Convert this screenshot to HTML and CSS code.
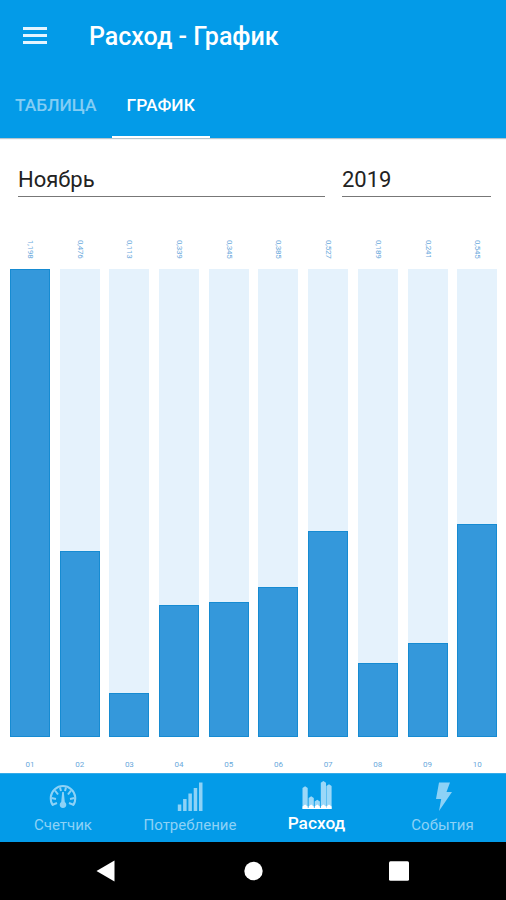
FILE: index.html
```html
<!DOCTYPE html>
<html lang="ru">
<head>
<meta charset="utf-8">
<title>Расход - График</title>
<link rel="stylesheet" href="styles.css">
</head>
<body>
<div class="app">
  <header class="header">
    <div class="toolbar">
      <svg class="menu" viewBox="0 0 24 18"><path d="M0 0h24v3H0zM0 7h24v3H0zM0 14h24v3H0z" fill="currentColor"/></svg>
      <h1 class="title">Расход - График</h1>
    </div>
    <nav class="tabs">
      <a class="tab">ТАБЛИЦА</a>
      <a class="tab tab-active">ГРАФИК</a>
    </nav>
  </header>
  <main class="content">
    <div class="filters">
      <div class="field field-month">Ноябрь</div>
      <div class="field field-year">2019</div>
    </div>
    <div class="chart">
      <div class="column"><span class="value">1,198</span><div class="track"><div class="bar" style="height:100%"></div></div><span class="day">01</span></div>
      <div class="column"><span class="value">0,476</span><div class="track"><div class="bar" style="height:39.7%"></div></div><span class="day">02</span></div>
      <div class="column"><span class="value">0,113</span><div class="track"><div class="bar" style="height:9.4%"></div></div><span class="day">03</span></div>
      <div class="column"><span class="value">0,339</span><div class="track"><div class="bar" style="height:28.3%"></div></div><span class="day">04</span></div>
      <div class="column"><span class="value">0,345</span><div class="track"><div class="bar" style="height:28.8%"></div></div><span class="day">05</span></div>
      <div class="column"><span class="value">0,385</span><div class="track"><div class="bar" style="height:32.1%"></div></div><span class="day">06</span></div>
      <div class="column"><span class="value">0,527</span><div class="track"><div class="bar" style="height:44%"></div></div><span class="day">07</span></div>
      <div class="column"><span class="value">0,189</span><div class="track"><div class="bar" style="height:15.8%"></div></div><span class="day">08</span></div>
      <div class="column"><span class="value">0,241</span><div class="track"><div class="bar" style="height:20.1%"></div></div><span class="day">09</span></div>
      <div class="column"><span class="value">0,545</span><div class="track"><div class="bar" style="height:45.5%"></div></div><span class="day">10</span></div>
    </div>
  </main>
  <nav class="bottom-nav">
    <a class="item">
      <svg class="icon" viewBox="0 0 32 32">
        <path d="M6 25.500A12.300 12.300 0 1 1 26 25.500" fill="none" stroke="currentColor" stroke-width="2"/>
        <path d="M5 25l5-2M27 25l-5-2M4.500 18l4.500 1M27.500 18l-4.500 1M8 10.500l3 4M24 10.500l-3 4M13 7.500l1 3.500M19 7.500l-1 3.500" stroke="currentColor" stroke-width="2"/>
        <path d="M15.200 12h1.600l1 10a3.300 3.300 0 1 1-3.600 0z" fill="currentColor"/>
      </svg>
      <span class="label">Счетчик</span>
    </a>
    <a class="item">
      <svg class="icon" viewBox="0 0 32 32"><path d="M3.800 24.500h3.500V31H3.800zM9.100 19h3.500v12H9.100zM14.400 13.500h3.500V31h-3.500zM19.700 8h3.500v23h-3.500zM25 2.500h3.500V31H25z" fill="currentColor"/></svg>
      <span class="label">Потребление</span>
    </a>
    <a class="item item-active">
      <svg class="icon" viewBox="0 0 32 32">
        <path d="M1.500 8l2.600-1.700L6.700 8v21H1.500zM7.600 18l2.600-1.700 2.600 1.700v11H7.600zM13.700 21.500l2.600-1.700 2.600 1.700V29h-5.200zM19.800 2.700L22.400 1 25 2.700V29h-5.200zM25.400 6L28 4.300 30.600 6v23h-5.200z" class="icon-bars"/>
        <path d="M1.500 29v-2.500l2.600-2 2.600 2V29zM7.600 29v-2.500l2.600-2 2.600 2V29zM13.700 29v-2.500l2.600-2 2.600 2V29zM19.800 29v-2.500l2.600-2 2.600 2V29zM25.400 29v-2.500l2.600-2 2.600 2V29zM1.500 28h29.100v1H1.500z" fill="currentColor"/>
      </svg>
      <span class="label">Расход</span>
    </a>
    <a class="item">
      <svg class="icon" viewBox="0 0 32 32"><path d="M12 2.500h11l-3.500 9.500H25L12 31l2.200-12H9z" fill="currentColor"/></svg>
      <span class="label">События</span>
    </a>
  </nav>
  <footer class="system-nav">
    <svg class="key" viewBox="0 0 24 24"><path d="M2.500 12 20.500 1.500v21z" fill="currentColor"/></svg>
    <svg class="key" viewBox="0 0 24 24"><circle cx="12.500" cy="12" r="9.200" fill="currentColor"/></svg>
    <svg class="key" viewBox="0 0 24 24"><rect x="2" y="2.200" width="20" height="19.600" rx="1.500" fill="currentColor"/></svg>
  </footer>
</div>
</body>
</html>
```

FILE: styles.css
```css
* { box-sizing: border-box; }
body { margin: 0; font-family: Roboto, "Liberation Sans", sans-serif; background: #fff; }
.app { width: 506px; height: 900px; display: flex; flex-direction: column; overflow: hidden; }

.header { height: 138px; background: #039be8; color: #fff; box-shadow: 0 1px 1px #b5c5ce; }
.toolbar { height: 72px; padding-left: 23px; display: flex; align-items: center; }
.menu { width: 24px; height: 18px; color: #e4f5ff; }
.title { margin: 2px 0 0 42px; font-size: 25px; line-height: 30px; font-weight: 500; white-space: nowrap; }
.tabs { height: 66px; display: flex; }
.tab { height: 66px; padding: 2px 15px 0; display: flex; align-items: center; font-size: 17.4px; font-weight: 500; color: #83cdf4; border-bottom: 2px solid transparent; }
.tab-active { color: #fff; border-bottom-color: #fff; }

.content { height: 635px; display: flex; flex-direction: column; }
.filters { height: 60px; padding: 22px 15px 0 18px; display: flex; gap: 17px; }
.field { height: 37px; line-height: 39px; font-size: 22px; color: #222; border-bottom: 1px solid #777; }
.field-month { width: 307px; }
.field-year { width: 149px; }

.chart { flex: 1; padding: 42px 0 0 10px; display: grid; grid-template-columns: repeat(10, 40px); column-gap: 9.7px; }
.column { display: flex; flex-direction: column; align-items: center; color: #6aa9dc; font-size: 8px; }
.value { height: 29px; width: 8px; line-height: 8px; writing-mode: vertical-rl; letter-spacing: -.2px; }
.track { width: 40px; height: 468px; background: #e5f2fc; display: flex; align-items: flex-end; }
.bar { width: 100%; background: #3498db; border: 1px solid #168bd2; }
.day { margin-top: 22px; line-height: 11px; }

.bottom-nav { height: 69px; display: grid; grid-template-columns: 126px 128px 125px 127px; background: #039be8; color: #8dd2f6; border-top: 1px solid #34abe9; }
.item { display: flex; flex-direction: column; align-items: center; padding-top: 6px; }
.icon { width: 32px; height: 32px; }
.icon-bars { fill: #9bd8f8; }
.label { font-size: 15px; line-height: 20px; margin-top: 3px; }
.item-active { color: #fff; }
.item-active .label { font-size: 17.3px; font-weight: 500; margin-top: 1px; }

.system-nav { height: 58px; background: #000; color: #fff; display: flex; justify-content: space-between; padding: 17px 95px 0 94px; }
.key { width: 24px; height: 24px; }
```
